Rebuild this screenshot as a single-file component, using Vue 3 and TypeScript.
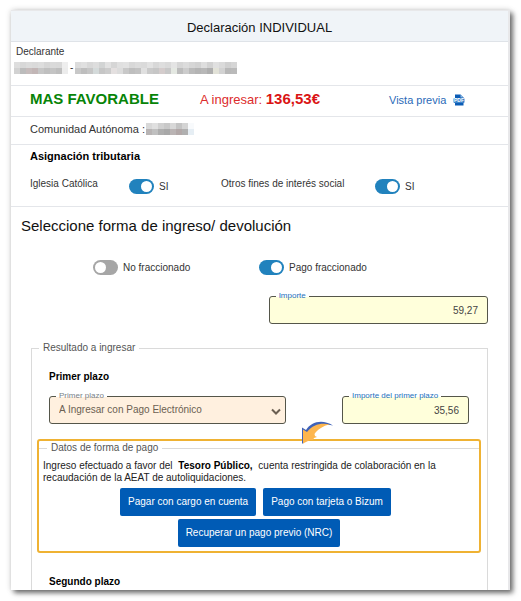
<script setup lang="ts">
import { ref } from 'vue'

const iglesia = ref(true)
const otrosFines = ref(true)
const noFraccionado = ref(false)
const fraccionado = ref(true)
const importe = ref('59,27')
const importePrimerPlazo = ref('35,56')
const formaPago = ref('electronico')

// Two rows of grey tones for each redacted value
const nif: string[][] = [
  ['#dedede', '#d8d8d8', '#dcdcdc', '#dadada', '#dddddd', '#d6d6d6', '#dadada', '#d9d9d9', '#eeeeee'],
  ['#d2d2d2', '#bcbcbc', '#c6bcbc', '#c2b6b6', '#c6c6c6', '#bfbfbf', '#c4c4c4', '#bebebe', '#ececec'],
]
const nombre: string[][] = [
  ['#dcdcdc', '#e0e0e0', '#d8d8d8', '#dddddd', '#d2d4d4', '#e2e2e2', '#d6d6d6', '#e0e0e0', '#e2e2e2', '#d8d8d8', '#dcdcdc', '#dadada', '#e2e2e2', '#d8d8d8', '#dedede', '#dadada', '#e4e4e4', '#d6d6d6', '#dcdcdc', '#d6d6d6', '#d2d2d2', '#dedede', '#d2d2d2', '#e0e0e0', '#dadada', '#d0d0d0', '#d6d6d6'],
  ['#c8c8c8', '#bebebe', '#c6c6c6', '#d4dada', '#c6c6c6', '#cccccc', '#e4e0e0', '#dcdcdc', '#c8c8c8', '#bebebe', '#c2c2c2', '#e0e0e0', '#cacaca', '#c6c6c6', '#d4cccc', '#c8c8c8', '#e4e8e2', '#bcbcbc', '#cccccc', '#bababa', '#b4b4b4', '#b8b8b8', '#aeaeae', '#e2e2d8', '#d2d2d2', '#b8b8b8', '#bababa'],
]
const comunidad: string[][] = [
  ['#d8d8d8', '#e0e0e0', '#d0d0d0', '#c8c8c8', '#d8d8d8', '#c4c4c4', '#d4d4d4', '#f8fafc'],
  ['#b8b4b4', '#c0c0c0', '#aeaeae', '#a8a8a8', '#bab4b4', '#b2a8a8', '#b0b0b0', '#e6eef4'],
]
</script>

<template>
  <main class="card">
    <header class="title">Declaración INDIVIDUAL</header>

    <section class="declarante">
      <div>Declarante</div>
      <div class="redacted-line">
        <span class="mosaic">
          <span v-for="(row, r) in nif" :key="r" class="mosaic-row">
            <i v-for="(c, i) in row" :key="i" :style="{ background: c }"></i>
          </span>
        </span>
        <span>-</span>
        <span class="mosaic">
          <span v-for="(row, r) in nombre" :key="r" class="mosaic-row">
            <i v-for="(c, i) in row" :key="i" :style="{ background: c }"></i>
          </span>
        </span>
      </div>
    </section>

    <section class="summary">
      <strong class="favorable">MAS FAVORABLE</strong>
      <span class="result">A ingresar: <strong>136,53€</strong></span>
      <a class="preview" href="#">
        Vista previa
        <svg viewBox="0 0 12 12" width="12" height="12" aria-hidden="true">
          <path d="M2 0.5h5.5l3 3V11.5H2z" fill="#0b5cb5" />
          <path d="M7.5 0.5v3h3z" fill="#8db8e4" />
          <rect x="0.5" y="4" width="11" height="5" rx="1" fill="#3d83ca" />
          <text x="1" y="8.4" font-size="5" font-weight="700" fill="#fff">PDF</text>
        </svg>
      </a>
    </section>

    <section class="comunidad">
      <span>Comunidad Autónoma :</span>
      <span class="mosaic">
        <span v-for="(row, r) in comunidad" :key="r" class="mosaic-row">
          <i v-for="(c, i) in row" :key="i" :style="{ background: c }"></i>
        </span>
      </span>
    </section>

    <section class="asignacion">
      <h2>Asignación tributaria</h2>
      <div class="asignacion-grid">
        <label for="iglesia">Iglesia Católica</label>
        <span class="switch"><input id="iglesia" v-model="iglesia" type="checkbox" />SI</span>
        <label for="otros">Otros fines de interés social</label>
        <span class="switch"><input id="otros" v-model="otrosFines" type="checkbox" />SI</span>
      </div>
    </section>

    <section class="pago">
      <h1>Seleccione forma de ingreso/ devolución</h1>
      <div class="modes">
        <label class="switch"><input v-model="noFraccionado" type="checkbox" />No fraccionado</label>
        <label class="switch"><input v-model="fraccionado" type="checkbox" />Pago fraccionado</label>
      </div>

      <div class="field total">
        <label for="importe">Importe</label>
        <input id="importe" v-model="importe" type="text" />
      </div>

      <fieldset class="resultado">
        <legend>Resultado a ingresar</legend>
        <h3>Primer plazo</h3>
        <div class="plazo">
          <div class="field choice">
            <label for="forma">Primer plazo</label>
            <select id="forma" v-model="formaPago">
              <option value="electronico">A Ingresar con Pago Electrónico</option>
            </select>
            <svg class="chevron" viewBox="0 0 10 8" width="10" height="8" aria-hidden="true">
              <path d="M1 1.5l4 4 4-4" fill="none" stroke="#6b5f52" stroke-width="2" />
            </svg>
          </div>
          <div class="field amount">
            <label for="primer">Importe del primer plazo</label>
            <input id="primer" v-model="importePrimerPlazo" type="text" />
          </div>
        </div>

        <div class="highlight">
          <svg class="arrow" viewBox="0 0 33 24" width="33" height="24" aria-hidden="true">
            <path d="M1 7.5L5 10C10 2 21 -1.500 32 5.500C22 3 13 8 9 13L2 23.500H1z" fill="#3f62b8" />
            <path d="M2 9.500L6 12C12 4.500 20 2.500 29 4.500C22 5.500 16 10 13.500 14L14 16L16 17L13 18L12 20L9 20L2 23.500z" fill="#fdb64e" />
          </svg>
          <fieldset class="datos">
            <legend>Datos de forma de pago</legend>
            <p>
              Ingreso efectuado a favor del <strong>Tesoro Público,</strong> cuenta restringida de
              colaboración en la recaudación de la AEAT de autoliquidaciones.
            </p>
            <div class="actions">
              <div class="pair">
                <button type="button">Pagar con cargo en cuenta</button>
                <button type="button">Pago con tarjeta o Bizum</button>
              </div>
              <button type="button">Recuperar un pago previo (NRC)</button>
            </div>
          </fieldset>
        </div>

        <h3>Segundo plazo</h3>
      </fieldset>
    </section>
  </main>
</template>

<style>
body {
  background: #fff;
}
</style>

<style scoped>
* {
  box-sizing: border-box;
}
.card {
  margin: 10px 11px 11px;
  border: 1px solid #e8e8ea;
  border-width: 1px 2px 0 0;
  background: #fff;
  box-shadow: 3px 3px 5px rgba(0, 0, 0, 0.55), 0 0 6px rgba(0, 0, 0, 0.16);
  font-family: "Liberation Sans", Arial, sans-serif;
  font-size: 10px;
  line-height: 12px;
  color: #333;
  overflow: hidden;
}
h1,
h2,
h3,
p {
  margin: 0;
}
.title {
  padding: 9px 0 5px;
  background: #f0f4f8;
  border-bottom: 1px solid #dfe3e8;
  text-align: center;
  font-size: 13px;
  line-height: 16px;
  color: #111;
}
.declarante {
  height: 44px;
  padding: 4px 3px 0;
  border-bottom: 1px solid #e4e6ea;
}
.declarante > div:first-child {
  padding-left: 2px;
}
.redacted-line {
  display: flex;
  align-items: center;
  gap: 2px;
  margin-top: 4px;
}
.mosaic {
  display: flex;
  flex-direction: column;
}
.mosaic-row {
  display: flex;
}
.mosaic i {
  width: 6px;
  height: 6px;
}
.summary {
  display: grid;
  grid-template-columns: 170fr 189fr 119fr;
  align-items: center;
  height: 31px;
  padding: 0 0 4px 19px;
  border-bottom: 1px solid #e4e6ea;
}
.favorable {
  font-size: 15px;
  line-height: 18px;
  color: #078407;
}
.result {
  font-size: 13px;
  color: #dc2c2c;
}
.result strong {
  font-size: 15px;
  color: #da1414;
}
.preview {
  display: flex;
  align-items: center;
  gap: 7px;
  padding-top: 2px;
  font-size: 11px;
  color: #2a6ab8;
  text-decoration: none;
}
.comunidad {
  display: flex;
  align-items: center;
  gap: 1px;
  height: 28px;
  padding: 0 19px 4px;
  border-bottom: 1px solid #e4e6ea;
  font-size: 11px;
}
.asignacion {
  height: 62px;
  padding: 4px 0 0 19px;
  border-bottom: 1px solid #e4e6ea;
}
h2 {
  font-size: 11px;
  line-height: 14px;
  color: #000;
}
.asignacion-grid {
  display: grid;
  grid-template-columns: 99fr 92fr 154fr 133fr;
  align-items: start;
  margin-top: 15px;
}
.switch {
  display: flex;
  align-items: center;
  gap: 5px;
}
.asignacion-grid .switch {
  padding-top: 1px;
}
.switch input {
  appearance: none;
  width: 25px;
  height: 15px;
  margin: 0;
  border-radius: 8px;
  background: #a6a6a6;
  display: flex;
  align-items: center;
  padding: 0 2px;
}
.switch input::before {
  content: "";
  width: 11px;
  height: 11px;
  border-radius: 50%;
  background: #fff;
}
.switch input:checked {
  background: #2182bd;
  justify-content: flex-end;
}
.pago {
  padding: 10px 20px 0;
}
h1 {
  margin-left: -10px;
  font-size: 15px;
  font-weight: 400;
  line-height: 18px;
  color: #111;
}
.modes {
  display: grid;
  grid-template-columns: 166fr 229fr;
  padding-left: 62px;
  margin-top: 25px;
}
.field {
  position: relative;
}
.field label {
  position: absolute;
  top: -5px;
  left: 7px;
  padding: 0 3px;
  font-size: 8px;
  line-height: 10px;
  color: #1b6fbd;
  background: linear-gradient(#fff 60%, transparent 60%);
}
.field input,
.field select {
  display: block;
  width: 100%;
  height: 28px;
  margin: 0;
  padding: 0 9px;
  border: 1px solid #55564a;
  border-radius: 3px;
  background: #ffffdb;
  font: inherit;
  color: #444;
  text-align: right;
}
.field select {
  appearance: none;
  background: #fff0df;
  text-align: left;
  color: #6b5f52;
}
.choice label {
  color: #7a7f86;
}
.chevron {
  position: absolute;
  right: 5px;
  top: 12px;
}
.total {
  width: 48%;
  margin: 21px 0 0 auto;
}
fieldset {
  min-width: 0;
  margin: 0;
  border: 1px solid #dadada;
}
.resultado {
  margin-top: 17px;
  padding: 16px 6px 2px 5px;
  border-bottom: 0;
}
legend {
  padding: 0 4px;
  line-height: 14px;
  color: #555;
}
.resultado > legend {
  margin-left: 2px;
}
h3 {
  margin-left: 12px;
  font-size: 10px;
  line-height: 12px;
  color: #000;
}
.plazo {
  display: grid;
  grid-template-columns: 237fr 127fr;
  gap: 56px;
  margin: 13px 12px 0 12px;
}
.highlight {
  position: relative;
  margin-top: 15px;
  border: 2px solid #efb233;
  border-radius: 3px;
  padding-bottom: 4px;
}
.arrow {
  position: absolute;
  left: 262px;
  top: -21px;
}
.datos {
  border-width: 1px 0 0;
  padding: 5px 4px 0;
}
.datos > legend {
  margin-left: 4px;
}
.datos p {
  color: #222;
}
.datos p strong {
  margin: 0 3px;
  color: #000;
}
.actions {
  display: flex;
  flex-direction: column;
  align-items: center;
  gap: 3px;
  margin-top: 4px;
}
.pair {
  display: flex;
  gap: 7px;
  padding-right: 7px;
}
button {
  height: 28px;
  padding: 0 8px;
  border: 0;
  border-radius: 2px;
  background: #005bb5;
  color: #fff;
  font: inherit;
}
.highlight + h3 {
  margin-top: 23px;
}
</style>
